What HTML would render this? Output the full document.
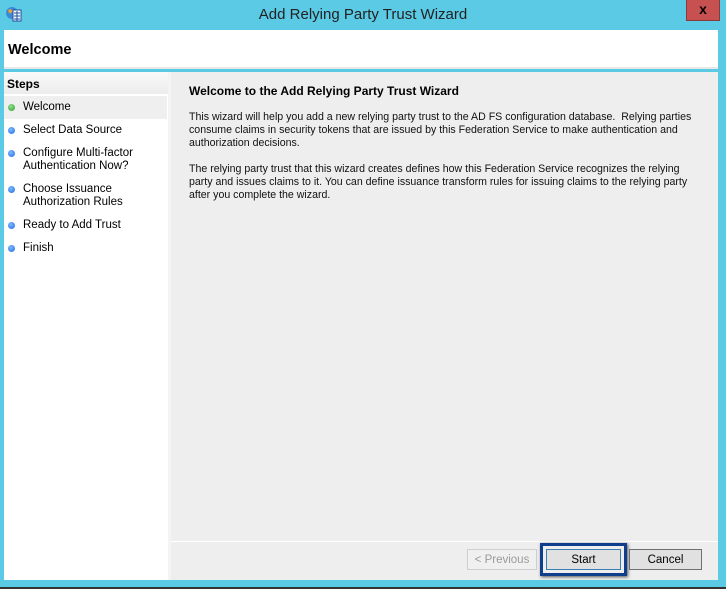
<!DOCTYPE html>
<html><head><style>
*{margin:0;padding:0;box-sizing:border-box}
body{width:726px;height:589px;overflow:hidden;background:#5bcae5;font-family:"Liberation Sans",sans-serif;font-size:11.5px;color:#000;position:relative}
.abs{position:absolute}
.title{left:0;top:6px;width:726px;text-align:center;font-size:15px;color:#222}
.close{left:686px;top:0;width:34px;height:21px;background:#c75050;border:1px solid #8b3a3a;border-top:none;color:#000;font-weight:bold;font-size:14px;text-align:center;line-height:18px}
.hdr{left:4px;top:30px;width:714px;height:39px;background:#fff;border-bottom:2px solid #e8e8e8}
.hdr b{position:absolute;left:4px;top:12px;font-size:14.5px}
.left{left:4px;top:72px;width:164px;height:508px;background:#fff}
.gap{left:168px;top:72px;width:3px;height:508px;background:#f4f4f4}
.right{left:171px;top:72px;width:547px;height:508px;background:#eeeeee}
.steps{left:0;top:0;width:164px;height:22px;background:linear-gradient(#fafafa,#ececec);font-weight:bold;font-size:12px;padding:5px 3px}
.item{position:absolute;left:19px;font-size:11.5px;line-height:13px}
.dot{position:absolute;left:4px;width:7px;height:7px;border-radius:50%;background:radial-gradient(circle at 40% 35%,#7fb8ff,#1a6fe0)}
p{font-size:10.6px;line-height:13px;color:#111;white-space:nowrap}
.btn{position:absolute;height:21px;top:549px;border:1px solid #adadad;background:#e1e1e1;text-align:center;line-height:20px;font-size:11.5px}
</style></head><body>
<svg class="abs" style="left:5px;top:5px" width="18" height="18" viewBox="0 0 18 18"><circle cx="7" cy="8" r="6" fill="#3a8ad8"/><path d="M3 5 q3 -2 5 1 q-2 3 -4 2z" fill="#e2a23c"/><rect x="8" y="5" width="8" height="11" fill="#fff" stroke="#1b4fa0"/><path d="M9 8h6M9 11h6M9 14h6M12 6v10" stroke="#1b4fa0"/></svg>
<div class="abs title">Add Relying Party Trust Wizard</div>
<div class="abs close">x</div>
<div class="abs hdr"><b>Welcome</b></div>
<div class="abs left">
 <div class="abs steps">Steps</div>
 <div class="abs" style="left:0;top:24px;width:163px;height:23px;background:#efefef"></div>
 <div class="dot" style="top:32px;background:radial-gradient(circle at 40% 35%,#8fe08f,#2ea02e)"></div><div class="item" style="top:29px">Welcome</div>
 <div class="dot" style="top:55px"></div><div class="item" style="top:52px">Select Data Source</div>
 <div class="dot" style="top:78px"></div><div class="item" style="top:75px">Configure Multi-factor<br>Authentication Now?</div>
 <div class="dot" style="top:114px"></div><div class="item" style="top:111px">Choose Issuance<br>Authorization Rules</div>
 <div class="dot" style="top:150px"></div><div class="item" style="top:147px">Ready to Add Trust</div>
 <div class="dot" style="top:173px"></div><div class="item" style="top:170px">Finish</div>
</div>
<div class="abs gap"></div>
<div class="abs right">
 <div class="abs" style="left:18px;top:12px;font-weight:bold;font-size:12px">Welcome to the Add Relying Party Trust Wizard</div>
 <div class="abs" style="left:18px;top:39px;width:525px">
 <p>This wizard will help you add a new relying party trust to the AD FS configuration database.&nbsp; Relying parties<br>consume claims in security tokens that are issued by this Federation Service to make authentication and<br>authorization decisions.</p>
 <p style="margin-top:13px">The relying party trust that this wizard creates defines how this Federation Service recognizes the relying<br>party and issues claims to it. You can define issuance transform rules for issuing claims to the relying party<br>after you complete the wizard.</p>
 </div>
 <div class="abs" style="left:0;top:469px;width:547px;height:1px;background:#fff"></div>
</div>
<div class="btn" style="left:467px;width:70px;color:#9a9a9a;border-color:#cfcfcf;background:#f0f0f0">&lt; Previous</div>
<div class="abs" style="left:540px;top:543px;width:87px;height:33px;border:3px solid #0f3f8c;box-shadow:1px 1px 3px #555"></div>
<div class="btn" style="left:546px;width:75px;border-color:#3c7fb1">Start</div>
<div class="btn" style="left:629px;width:73px;border-color:#707070">Cancel</div>
<div class="abs" style="left:0;top:587px;width:726px;height:2px;background:#333"></div>
</body></html>
